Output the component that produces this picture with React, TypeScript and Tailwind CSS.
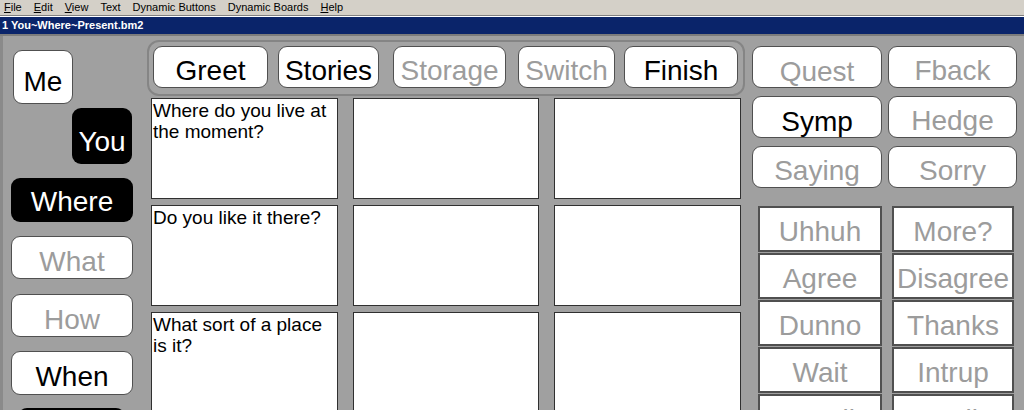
import React from "react";

const font = { fontFamily: '"Liberation Sans", Arial, sans-serif' };

type BtnProps = { label: string; tone?: "black" | "gray" | "dark"; className?: string };

function RBtn({ label, tone = "black", className = "" }: BtnProps) {
  const base =
    tone === "dark"
      ? "bg-black text-white"
      : tone === "gray"
      ? "bg-white text-[#9c9c9c] border border-[#505050]"
      : "bg-white text-black border border-[#505050]";
  return (
    <div
      className={`flex items-center justify-center rounded-[9px] text-[28px] leading-none whitespace-nowrap shrink-0 ${base} ${className}`}
    >
      {label}
    </div>
  );
}

function SqBtn({ label }: { label: string }) {
  return (
    <div className="flex items-center justify-center h-[46px] bg-white border-2 border-[#505050] text-[28px] leading-none text-[#9c9c9c] pt-[6px] whitespace-nowrap overflow-hidden">
      {label}
    </div>
  );
}

function Cell({ text }: { text?: string }) {
  return (
    <div className="h-[101px] bg-white border border-[#303030] pt-[1px] pl-[1px] text-[19px] leading-[21px] text-black">
      {text}
    </div>
  );
}

export default function App() {
  return (
    <div className="w-[1024px] h-[410px] overflow-hidden bg-[#a0a0a0] flex flex-col" style={font}>
      {/* Menu bar */}
      <div className="h-[15px] bg-[#d4d0c8] flex items-center pl-[4px] gap-[12px] text-[11px] leading-none text-black shrink-0">
        <span><u>F</u>ile</span>
        <span><u>E</u>dit</span>
        <span><u>V</u>iew</span>
        <span>Text</span>
        <span>Dynamic Buttons</span>
        <span>Dynamic Boards</span>
        <span><u>H</u>elp</span>
      </div>
      <div className="h-px bg-[#808080] shrink-0" />
      <div className="h-px bg-white shrink-0" />
      {/* Title bar */}
      <div className="h-[17px] bg-[#0a246a] flex items-center pl-[2px] text-[11px] font-bold text-white leading-none shrink-0">
        1 You~Where~Present.bm2
      </div>
      <div className="h-[2px] bg-[#7c7c7c] shrink-0" />

      {/* Content */}
      <div className="flex flex-1 min-h-0">
        {/* Left column */}
        <div className="w-[147px] shrink-0 border-l-[3px] border-[#8a8a8a] flex flex-col items-start">
          <RBtn label="Me" className="ml-[10px] mt-[14px] w-[60px] h-[54px] pt-[9px]" />
          <RBtn label="You" tone="dark" className="ml-[69px] mt-[4px] w-[60px] h-[56px] pt-[11px]" />
          <RBtn label="Where" tone="dark" className="ml-[8px] mt-[14px] w-[122px] h-[44px] pt-[4px]" />
          <RBtn label="What" tone="gray" className="ml-[8px] mt-[14px] w-[122px] h-[43px] pt-[9px]" />
          <RBtn label="How" tone="gray" className="ml-[8px] mt-[15px] w-[122px] h-[43px] pt-[9px]" />
          <RBtn label="When" className="ml-[8px] mt-[14px] w-[122px] h-[44px] pt-[8px]" />
          <RBtn label="" tone="dark" className="ml-[15px] mt-[13px] w-[107px] h-[20px]" />
        </div>

        {/* Middle column */}
        <div className="w-[599px] shrink-0 flex flex-col">
          <div className="mt-[4px] w-[598px] h-[56px] shrink-0 rounded-[12px] border-2 border-[#858585] bg-[#a3a3a3] pt-[4px] pl-[4px] flex items-start">
            <RBtn label="Greet" className="w-[115px] h-[42px] pt-[7px]" />
            <RBtn label="Stories" className="ml-[10px] w-[101px] h-[42px] pt-[7px]" />
            <RBtn label="Storage" tone="gray" className="ml-[14px] w-[113px] h-[42px] pt-[7px]" />
            <RBtn label="Switch" tone="gray" className="ml-[12px] w-[97px] h-[42px] pt-[7px]" />
            <RBtn label="Finish" className="ml-[9px] w-[114px] h-[42px] pt-[7px]" />
          </div>
          <div className="mt-[2px] ml-[4px] grid grid-cols-[187px_186px_187px] gap-x-[15px] gap-y-[6px]">
            <Cell text="Where do you live at the moment?" />
            <Cell />
            <Cell />
            <Cell text="Do you like it there?" />
            <Cell />
            <Cell />
            <Cell text="What sort of a place is it?" />
            <Cell />
            <Cell />
          </div>
        </div>

        {/* Right column */}
        <div className="flex-1 flex flex-col">
          <div className="mt-[10px] ml-[6px] grid grid-cols-[130px_129px] gap-x-[6px] gap-y-[8px]">
            <RBtn label="Quest" tone="gray" className="h-[42px] pt-[9px]" />
            <RBtn label="Fback" tone="gray" className="h-[42px] pt-[7px]" />
            <RBtn label="Symp" className="h-[42px] pt-[9px]" />
            <RBtn label="Hedge" tone="gray" className="h-[42px] pt-[7px]" />
            <RBtn label="Saying" tone="gray" className="h-[42px] pt-[7px]" />
            <RBtn label="Sorry" tone="gray" className="h-[42px] pt-[7px]" />
          </div>
          <div className="mt-[18px] ml-[12px] grid grid-cols-[124px_122px] gap-x-[10px] gap-y-[1px]">
            <SqBtn label="Uhhuh" />
            <SqBtn label="More?" />
            <SqBtn label="Agree" />
            <SqBtn label="Disagree" />
            <SqBtn label="Dunno" />
            <SqBtn label="Thanks" />
            <SqBtn label="Wait" />
            <SqBtn label="Intrup" />
            <SqBtn label="Small" />
            <SqBtn label="Really" />
          </div>
        </div>
      </div>
    </div>
  );
}
